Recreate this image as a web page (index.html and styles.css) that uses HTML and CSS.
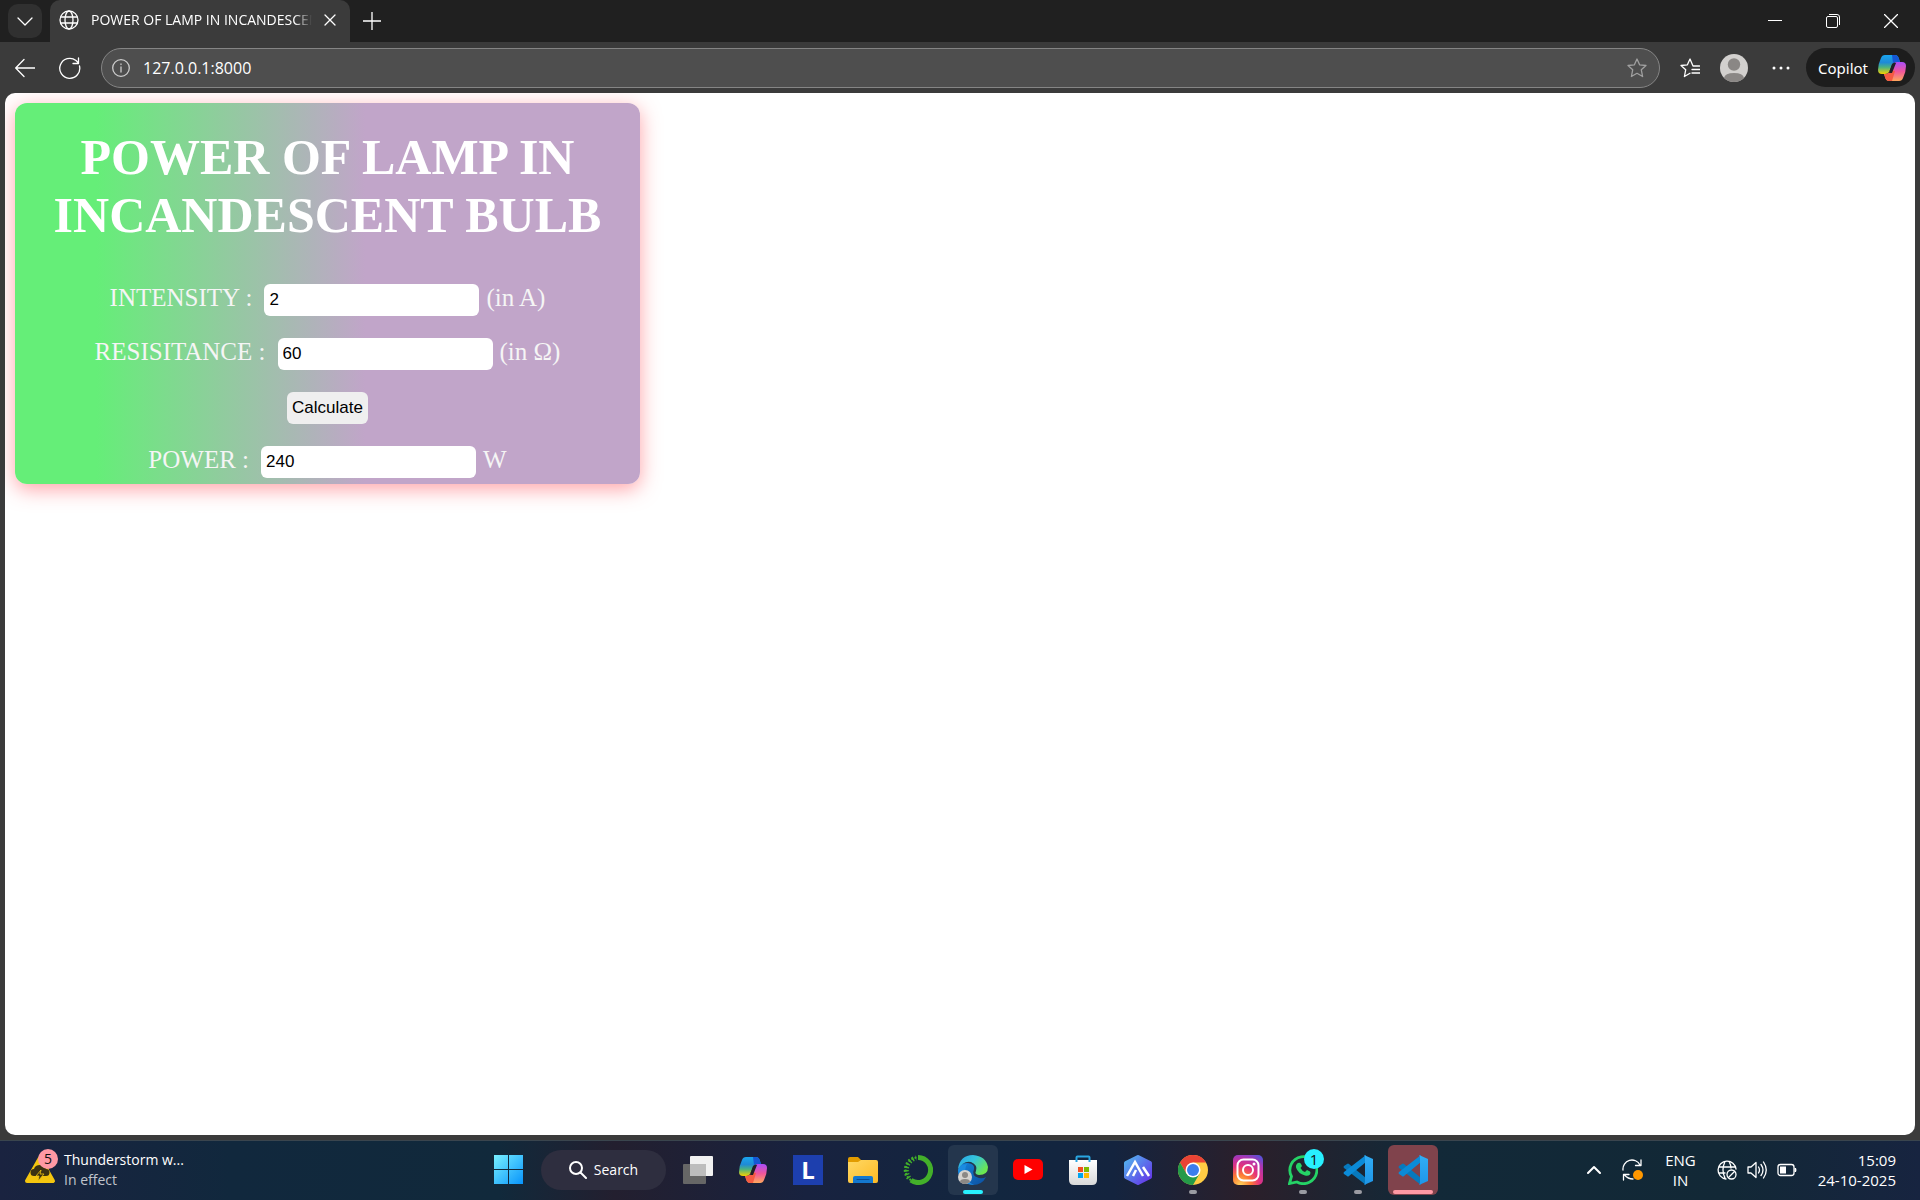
FILE: index.html
```html
<!DOCTYPE html>
<html lang="en">
<head>
<meta charset="utf-8">
<title>POWER OF LAMP IN INCANDESCENT BULB</title>
<link rel="stylesheet" href="styles.css">
</head>
<body>
<svg class="defs" width="0" height="0" aria-hidden="true">
  <defs>
    <linearGradient id="cpA" x1="0" y1="0" x2="0" y2="1"><stop offset="0" stop-color="#1aa5ee"/><stop offset=".4" stop-color="#1f8ad6"/><stop offset=".65" stop-color="#4db37e"/><stop offset="1" stop-color="#f6d100"/></linearGradient>
    <linearGradient id="cpB" x1="0" y1="0" x2="0" y2="1"><stop offset="0" stop-color="#a94dfa"/><stop offset=".5" stop-color="#f0569b"/><stop offset="1" stop-color="#ffa85c"/></linearGradient>
    <linearGradient id="win" x1="0" y1="0" x2="1" y2="1"><stop offset="0" stop-color="#78f0ff"/><stop offset="1" stop-color="#0894fb"/></linearGradient>
    <linearGradient id="fold" x1="0" y1="0" x2="1" y2="1"><stop offset="0" stop-color="#ffd965"/><stop offset="1" stop-color="#fdb924"/></linearGradient>
    <linearGradient id="edgeTop" x1="0" y1="0" x2="1" y2=".6"><stop offset="0" stop-color="#27a5e8"/><stop offset=".5" stop-color="#35c4dc"/><stop offset="1" stop-color="#6ce84f"/></linearGradient>
    <linearGradient id="edgeLow" x1="0" y1="0" x2="1" y2="1"><stop offset="0" stop-color="#1484dc"/><stop offset="1" stop-color="#0c4f9f"/></linearGradient>
    <linearGradient id="hex" x1="0" y1="0" x2="1" y2="1"><stop offset="0" stop-color="#52b5ee"/><stop offset="1" stop-color="#6531e8"/></linearGradient>
    <radialGradient id="insta" cx=".25" cy="1" r="1.15"><stop offset="0" stop-color="#ffd45c"/><stop offset=".3" stop-color="#fd7a33"/><stop offset=".55" stop-color="#e5327b"/><stop offset=".8" stop-color="#b034b0"/><stop offset="1" stop-color="#5b50d6"/></radialGradient>
    <linearGradient id="code" x1="0" y1="0" x2="0" y2="1"><stop offset="0" stop-color="#31adf5"/><stop offset="1" stop-color="#1e96e8"/></linearGradient>
    <linearGradient id="bag" x1="0" y1="0" x2="0" y2="1"><stop offset="0" stop-color="#ffffff"/><stop offset="1" stop-color="#d9d9d9"/></linearGradient>
    <symbol id="copilot" viewBox="0 0 28 28">
      <path d="M7 1H17q3 0 4 4l1 3h-4q-3 0-4 3l-3 7q-1 2-4 2H4Q0 20 0 16Q0 10 3 4Q4 1 7 1Z" fill="url(#cpA)"/>
      <path d="M14 1h3q3 0 4 4l1 3h-4q-2 0-3 1Z" fill="#1557d4"/>
      <path d="M21 27H11q-3 0-4-4l-1-3h2q3 0 4-3l3-6q1-3 4-3h5q4 0 4 4q0 6-3 12q-1 3-4 3Z" fill="url(#cpB)"/>
      <path d="M14 27h-3q-3 0-4-4l-1-3h2q3 0 4-3l1-1 4 1Z" fill="#f55b42"/>
      <path d="M14 10l2-1h2l-4 10h-3Z" fill="#202027"/>
    </symbol>
    <symbol id="vscode" viewBox="0 0 30 30">
      <path d="M1 11l3-2q1-1 2 0l17 14v7L1 13q-1-1 0-2Z" fill="#0779bd"/>
      <path d="M1 19l3 2q1 1 2 0L23 7V0L1 17q-1 1 0 2Z" fill="#0b8bd8"/>
      <path d="M21 0l9 4v22l-9 4q1-1 1-3V3q0-2-1-3Z" fill="url(#code)"/>
    </symbol>
  </defs>
</svg>

<div class="screen">
  <header class="browser">
    <div class="tabstrip">
      <button class="tab-menu" aria-label="Tab actions"><svg width="16" height="16" viewBox="0 0 16 16"><path class="line" d="M1 5l7 7 7-7"/></svg></button>
      <div class="tab">
        <svg width="20" height="20" viewBox="0 0 20 20"><g class="line"><circle cx="10" cy="10" r="9"/><ellipse cx="10" cy="10" rx="4" ry="9"/><path d="M2 7h16M2 13h16"/></g></svg>
        <span class="tab-title">POWER OF LAMP IN INCANDESCENT BULB</span>
        <button class="plain" aria-label="Close tab"><svg width="12" height="12" viewBox="0 0 12 12"><path class="line" d="M1 1l10 10M11 1L1 11"/></svg></button>
      </div>
      <button class="plain new-tab" aria-label="New tab"><svg width="18" height="18" viewBox="0 0 18 18"><path class="line" d="M9 0v18M0 9h18"/></svg></button>
      <div class="window-buttons">
        <button class="plain" aria-label="Minimize"><svg width="14" height="14" viewBox="0 0 14 14"><path class="hair" d="M0 6.500h14"/></svg></button>
        <button class="plain" aria-label="Restore"><svg width="14" height="14" viewBox="0 0 14 14"><g class="hair"><rect x=".5" y="2.500" width="11" height="11" rx="1.500"/><path d="M3 .5h8q2.500 0 2.500 2.500v8"/></g></svg></button>
        <button class="plain" aria-label="Close"><svg width="14" height="14" viewBox="0 0 14 14"><path class="line" d="M.5 .5l13 13M13.500 .5l-13 13"/></svg></button>
      </div>
    </div>
    <div class="toolbar">
      <button class="plain back" aria-label="Back"><svg width="20" height="20" viewBox="0 0 20 20"><path class="line" d="M20 10H1M9 1.500L.7 10 9 18.500"/></svg></button>
      <button class="plain" aria-label="Refresh"><svg width="22" height="22" viewBox="0 0 22 22"><path class="line" d="M20.500 9A10 10 0 1 1 17 3.500l2.500 2.500M19.500 1v5.500H14"/></svg></button>
      <div class="address">
        <svg width="18" height="18" viewBox="0 0 18 18"><g class="line soft"><circle cx="9" cy="9" r="8.300"/><path d="M9 8v5M9 5v.5"/></g></svg>
        <input type="text" value="127.0.0.1:8000" aria-label="Address">
        <svg width="20" height="20" viewBox="0 0 20 20"><path class="line dim" d="M10 1l2.600 5.800 6.400.7-4.700 4.300 1.300 6.700L10 15.300l-5.600 3.200 1.300-6.700L1 7.500l6.400-.7Z"/></svg>
      </div>
      <button class="plain" aria-label="Favorites"><svg width="20" height="20" viewBox="0 0 20 20"><path class="line" d="M19.500 8H13L10 1 7.400 6.800 1 7.500l4.700 4.300-1.300 6.700L10 15.300M12 11.500h8M12 15h8"/></svg></button>
      <button class="plain" aria-label="Profile"><svg width="28" height="28" viewBox="0 0 28 28"><circle cx="14" cy="14" r="14" fill="#d2d0ce"/><circle cx="14" cy="10.500" r="6.200" fill="#8a8785"/><path d="M4 24q1-5 10-5t10 5q-4 4-10 4T4 24Z" fill="#8a8785"/></svg></button>
      <button class="plain more" aria-label="Settings and more"><svg width="18" height="18" viewBox="0 0 18 18" fill="#fff"><circle cx="2" cy="9" r="1.500"/><circle cx="9" cy="9" r="1.500"/><circle cx="16" cy="9" r="1.500"/></svg></button>
      <button class="copilot">Copilot <svg width="28" height="28"><use href="#copilot"/></svg></button>
    </div>
  </header>

  <main class="page">
    <form class="card" onsubmit="return false">
      <h1>POWER OF LAMP IN INCANDESCENT BULB</h1>
      <div class="row"><label for="intensity">INTENSITY :</label><input id="intensity" type="text" value="2"><span>(in A)</span></div>
      <div class="row"><label for="resistance">RESISITANCE :</label><input id="resistance" type="text" value="60"><span>(in Ω)</span></div>
      <div class="row"><button>Calculate</button></div>
      <div class="row"><label for="power">POWER :</label><input id="power" type="text" value="240"><span>W</span></div>
    </form>
  </main>

  <footer class="taskbar">
    <button class="weather">
      <span class="badged">
        <svg width="32" height="30" viewBox="0 0 32 30"><path d="M16 3L29 26H3Z" fill="#f4c60f" stroke="#f4c60f" stroke-width="4" stroke-linejoin="round"/><path d="M10 21a3.500 3.500 0 0 1 0-7q1-4 6-4t6 4a3.500 3.500 0 0 1 0 7Z" fill="#3b3212"/><path d="M17 15l-5 6h3l-1 5 6-7h-4Z" fill="#3b3212" stroke="#f4c60f" stroke-width=".8"/></svg>
        <span class="badge pink">5</span>
      </span>
      <span class="weather-text"><span>Thunderstorm w...</span><span class="muted">In effect</span></span>
    </button>
    <div class="apps">
      <button class="app" aria-label="Start"><svg width="30" height="30" viewBox="0 0 30 30"><path d="M0 0h14v14H0ZM15 0h14v14H15ZM0 15h14v14H0ZM15 15h14v14H15Z" fill="url(#win)"/></svg></button>
      <button class="search"><svg width="18" height="18" viewBox="0 0 18 18"><g class="line thick"><circle cx="7" cy="7" r="6"/><path d="M11.500 11.500L17 17"/></g></svg>Search</button>
      <button class="app" aria-label="Task view"><svg width="30" height="30" viewBox="0 0 30 30"><rect x="0" y="9" width="23" height="20" rx="1" fill="#666"/><rect x="7" y="1" width="23" height="20" rx="1" fill="#f1f1f1"/><path d="M7 9h16v12H7Z" fill="#bdbdbd"/></svg></button>
      <button class="app" aria-label="Copilot"><svg width="28" height="28"><use href="#copilot"/></svg></button>
      <button class="app" aria-label="L"><span class="letter-icon">L</span></button>
      <button class="app" aria-label="File Explorer"><svg width="30" height="30" viewBox="0 0 30 30"><path d="M0 8V4q0-2 2-2h8l3 3v4Z" fill="#e29c00"/><path d="M0 7h10l3-2h15q2 0 2 2v19q0 2-2 2H2q-2 0-2-2Z" fill="url(#fold)"/><path d="M5 28v-5q0-2 2-2h16q2 0 2 2v5Z" fill="#1478cf"/><path d="M9 24.500h12" stroke="#0c4c94" stroke-linecap="round"/></svg></button>
      <button class="app" aria-label="Anaconda"><svg width="30" height="30" viewBox="0 0 30 30" fill="none" stroke="#43b02a" stroke-width="5"><path d="M15 2.500a12.500 12.500 0 1 1-7 22.800"/><path d="M8 25.300A12.500 12.500 0 0 1 15 2.500" stroke-dasharray="2 1.500" stroke-width="2"/><path d="M6 23A12.500 12.500 0 0 1 13 3" stroke-dasharray="1.500 2" stroke-width="5"/></svg></button>
      <button class="app active" aria-label="Edge"><svg width="30" height="30" viewBox="0 0 30 30"><path d="M0 15Q2 7 10 8q7 1 6 6-3 7 5 9 4 1 7-1Q24 30 15 30 1 29 0 15Z" fill="url(#edgeLow)"/><path d="M8 11q-4 14 8 19Q1 29 0 15q2-6 9-6Z" fill="#1b8be0"/><path d="M0 14Q2 0 15 0q13 1 15 12 0 8-9 8-5-1-3-4 2-6-5-9Q6 5 0 14Z" fill="url(#edgeTop)"/><circle cx="7" cy="22" r="7" fill="#d4d2cf"/><circle cx="7" cy="20" r="3" fill="#8b8885"/><path d="M2 27q0-3 5-3t5 3q-5 4-10 0Z" fill="#8b8885"/></svg></button>
      <button class="app" aria-label="YouTube"><svg width="30" height="30" viewBox="0 0 30 30"><rect y="4" width="30" height="21" rx="5" fill="#f00"/><path d="M11.500 10v9l8-4.500Z" fill="#fff"/></svg></button>
      <button class="app" aria-label="Store"><svg width="30" height="30" viewBox="0 0 30 30"><path d="M1 5h28v20q0 5-5 5H6q-5 0-5-5Z" fill="url(#bag)"/><path d="M8.500 7V2.500q0-1 1-1h11q1 0 1 1V7" fill="none" stroke="#29a6e2" stroke-width="2"/><path d="M10 12h5v5h-5Z" fill="#f25022"/><path d="M16 12h5v5h-5Z" fill="#7fba00"/><path d="M10 18h5v5h-5Z" fill="#00a4ef"/><path d="M16 18h5v5h-5Z" fill="#ffb900"/></svg></button>
      <button class="app" aria-label="AI studio"><svg width="30" height="30" viewBox="0 0 30 30"><path d="M15 2L27 8V22L15 28 3 22V8Z" fill="url(#hex)" stroke="url(#hex)" stroke-width="4" stroke-linejoin="round"/><path d="M4 21l8-14 8 14M10 21l3-6M20 12l6 9" fill="none" stroke="#fff" stroke-width="2.500"/></svg></button>
      <button class="app running" aria-label="Chrome"><svg width="30" height="30" viewBox="0 0 30 30"><circle cx="15" cy="15" r="15" fill="#fc4"/><path d="M15 7.500H28A15 15 0 0 0 2 7.500l6.500 11.300Z" fill="#ea4335"/><path d="M2 7.500A15 15 0 0 0 15 30l6.500-11.200-13 0Z" fill="#249a48"/><circle cx="15" cy="15" r="7.500" fill="#fff"/><circle cx="15" cy="15" r="6" fill="#3b7ded"/></svg></button>
      <button class="app" aria-label="Instagram"><svg width="30" height="30" viewBox="0 0 30 30"><rect width="30" height="30" rx="5" fill="url(#insta)"/><g fill="none" stroke="#fff" stroke-width="2"><rect x="4.500" y="4.500" width="21" height="21" rx="6"/><circle cx="15" cy="15" r="5"/></g><circle cx="21" cy="9" r="1.500" fill="#fff"/></svg></button>
      <button class="app running" aria-label="WhatsApp"><span class="badged"><svg width="30" height="30" viewBox="0 0 30 30"><path d="M1.500 28.500l2-7A13.500 13.500 0 1 1 9 27Z" fill="none" stroke="#25d366" stroke-width="2.800"/><path d="M10 8q2-1 3 1l1 2-1.500 2q1.500 3 4.500 4l2-2 3 1.500q1 1 0 3-2 2-5 1-7-2-9-8-.5-3 2-4.500Z" fill="#25d366"/></svg><span class="badge cyan">1</span></span></button>
      <button class="app running" aria-label="Visual Studio Code"><svg width="30" height="30"><use href="#vscode"/></svg></button>
      <button class="app alert" aria-label="Visual Studio Code, needs attention"><svg width="30" height="30"><use href="#vscode"/></svg></button>
    </div>
    <div class="tray">
      <button class="plain" aria-label="Hidden icons"><svg width="14" height="14" viewBox="0 0 14 14"><path class="line thick" d="M1 10l6-6 6 6"/></svg></button>
      <button class="plain" aria-label="Updates"><svg width="22" height="22" viewBox="0 0 22 22"><path class="line" d="M1 11A9 9 0 0 1 18 6M19 1v5.500h-5.500M11 20Q6 20 2.500 16M1.500 21v-5.500H7"/><circle cx="16" cy="16" r="5" fill="#ff9800"/></svg></button>
      <button class="plain lang">ENG<br>IN</button>
      <button class="quick" aria-label="Quick settings">
        <svg width="20" height="20" viewBox="0 0 20 20"><path class="line" d="M9 19A9 9 0 1 1 19 9M8 18Q4 10 8 1.500M12 1.500Q14 5 14 8M2 7h16M2 13h6"/><circle class="line" cx="14.500" cy="14.500" r="4.500"/><path class="line" d="M11.500 17.500l6-6"/></svg>
        <svg width="20" height="20" viewBox="0 0 20 20"><path class="line" d="M1 7h3l5-4.500v15L4 13H1ZM11.500 7q2 3 0 6M14 4.500q4 5.500 0 11M16.500 2q5.500 8 0 16"/></svg>
        <svg width="20" height="20" viewBox="0 0 20 20"><rect class="line" x="1" y="4.500" width="16" height="11" rx="2.500"/><rect x="3" y="6.500" width="6" height="7" fill="#fff"/><path d="M17.500 8h1.500q1 2 0 4h-1.500Z" fill="#fff"/></svg>
      </button>
      <button class="plain clock">15:09<br>24-10-2025</button>
    </div>
  </footer>
</div>
</body>
</html>
```
FILE: styles.css
```css
* { box-sizing: border-box; }
body { margin: 0; background: #3b3b3b; }
button, input { font: inherit; color: inherit; border: 0; margin: 0; }
svg { display: block; flex: none; }
.defs { position: absolute; }

.screen {
  display: flex;
  flex-direction: column;
  min-height: 100vh;
  color: #fff;
  font: 16px/20px "Noto Sans", sans-serif;
}
.line { fill: none; stroke: #fff; stroke-width: 1.300; stroke-linecap: round; stroke-linejoin: round; }
.hair { fill: none; stroke: #fff; stroke-width: 1; }
.thick { stroke-width: 2; }
.soft { stroke: #ccc; }
.dim { stroke: #a0a0a0; }
.plain { display: grid; place-items: center; padding: 0; background: none; }

/* Tab strip */
.tabstrip { display: flex; align-items: center; height: 42px; padding-left: 8px; background: #202020; }
.tab-menu { display: grid; place-items: center; width: 34px; height: 34px; padding: 0; border-radius: 10px; background: #303030; }
.tab {
  display: flex;
  align-items: center;
  gap: 12px;
  width: 300px;
  height: 42px;
  margin-left: 8px;
  padding: 0 14px 2px 9px;
  border-radius: 10px 10px 0 0;
  background: #3b3b3b;
}
.tab-title {
  flex: 1;
  overflow: hidden;
  white-space: nowrap;
  font: 14px/20px "Open Sans", sans-serif;
  mask-image: linear-gradient(90deg, #000 92%, transparent);
}
.new-tab { margin-left: 13px; }
.window-buttons { display: flex; gap: 44px; margin-left: auto; padding-right: 22px; }

/* Address row */
.toolbar { display: flex; align-items: center; gap: 20px; height: 51px; padding: 0 5px 0 15px; }
.back { margin-right: 4px; }
.more { margin-left: 4px; }
.address {
  flex: 1;
  display: flex;
  align-items: center;
  gap: 13px;
  height: 40px;
  padding: 0 12px 0 10px;
  border: 1px solid #858585;
  border-radius: 20px;
  background: #4e4e4e;
}
.address input { flex: 1; min-width: 0; padding: 0; background: none; font: 16px/24px "Open Sans", sans-serif; outline: 0; }
.copilot {
  display: flex;
  align-items: center;
  gap: 10px;
  height: 39px;
  margin-left: -4px;
  padding: 0 9px 0 12px;
  border-radius: 20px;
  background: #1d1d1d;
  font-size: 15px;
}

/* Web page */
.page { flex: 1; margin: 0 5px; padding: 10px; border-radius: 10px; overflow: hidden; background: #fff; }
.card {
  width: 625px;
  padding: 25px 30px 6px;
  border-radius: 12px;
  background: linear-gradient(90deg, #65ee78 13%, #c1a5c9 56%);
  box-shadow: 0 5px 20px rgba(255, 70, 80, .5);
  color: #f5f5f5;
  font: 25px/28px "Liberation Serif", serif;
  text-align: center;
}
.card h1 { margin: 0 0 40px; color: #fff; font-size: 50px; line-height: 58px; }
.row { display: flex; justify-content: center; align-items: flex-start; height: 32px; margin-top: 22px; }
.row label { margin-right: 12px; }
.row span { margin-left: 7px; }
.row input, .row button {
  height: 32px;
  padding: 0 5px;
  border-radius: 6px;
  color: #000;
  font: 17px/20px "Liberation Sans", sans-serif;
}
.row input { width: 215px; background: #fff; }
.row button { background: #efefef; }

/* Taskbar */
.taskbar {
  display: grid;
  grid-template-columns: 1fr auto 1fr;
  align-items: center;
  height: 60px;
  margin-top: 5px;
  padding-bottom: 2px;
  border-top: 1px solid #3a454e;
  background: linear-gradient(90deg, #1a2340, #11283d 12%, #11293b 26%, #231f2f 32%, #18223f 42%, #12263f 52%, #14243f 58%, #2b1f2a 65%, #122938 74%, #122836 90%, #172440);
  font: 15px/20px "Open Sans", sans-serif;
}
.weather { display: flex; align-items: center; gap: 8px; padding: 0 0 0 24px; background: none; font-size: 14px; text-align: left; }
.weather-text { display: flex; flex-direction: column; }
.muted { color: #c0c4cc; }
.badged { position: relative; }
.badge {
  position: absolute;
  top: -6px;
  right: -6px;
  width: 20px;
  height: 20px;
  border-radius: 50%;
  color: #111;
  text-align: center;
}
.pink { right: -2px; background: #ff99a4; }
.cyan { background: #28f0ff; }
.apps { display: flex; align-items: center; gap: 5px; padding-left: 2px; }
.app { position: relative; display: grid; place-items: center; width: 50px; height: 50px; padding: 0; border-radius: 6px; background: none; }
.search {
  display: flex;
  align-items: center;
  justify-content: center;
  gap: 7px;
  width: 125px;
  height: 40px;
  margin: 0 2px;
  border-radius: 20px;
  background: #2e2e3f;
  font-size: 14px;
}
.letter-icon { width: 30px; height: 30px; background: #1d3fae; font: bold 24px/30px "Open Sans", sans-serif; }
.active { background: #24364d; }
.alert { background: #80434c; }
.running::after, .active::after, .alert::after {
  content: "";
  position: absolute;
  bottom: 1px;
  left: 21px;
  width: 8px;
  height: 4px;
  border-radius: 2px;
  background: #9a9ba2;
}
.active::after { left: 15px; width: 20px; background: #28f0ff; }
.alert::after { left: 5px; width: 40px; background: #ff99a4; }
.tray { display: flex; align-items: center; justify-content: flex-end; gap: 21px; padding-right: 24px; }
.quick { display: flex; gap: 10px; padding: 0; background: none; }
.clock { justify-items: end; text-align: right; }
```
